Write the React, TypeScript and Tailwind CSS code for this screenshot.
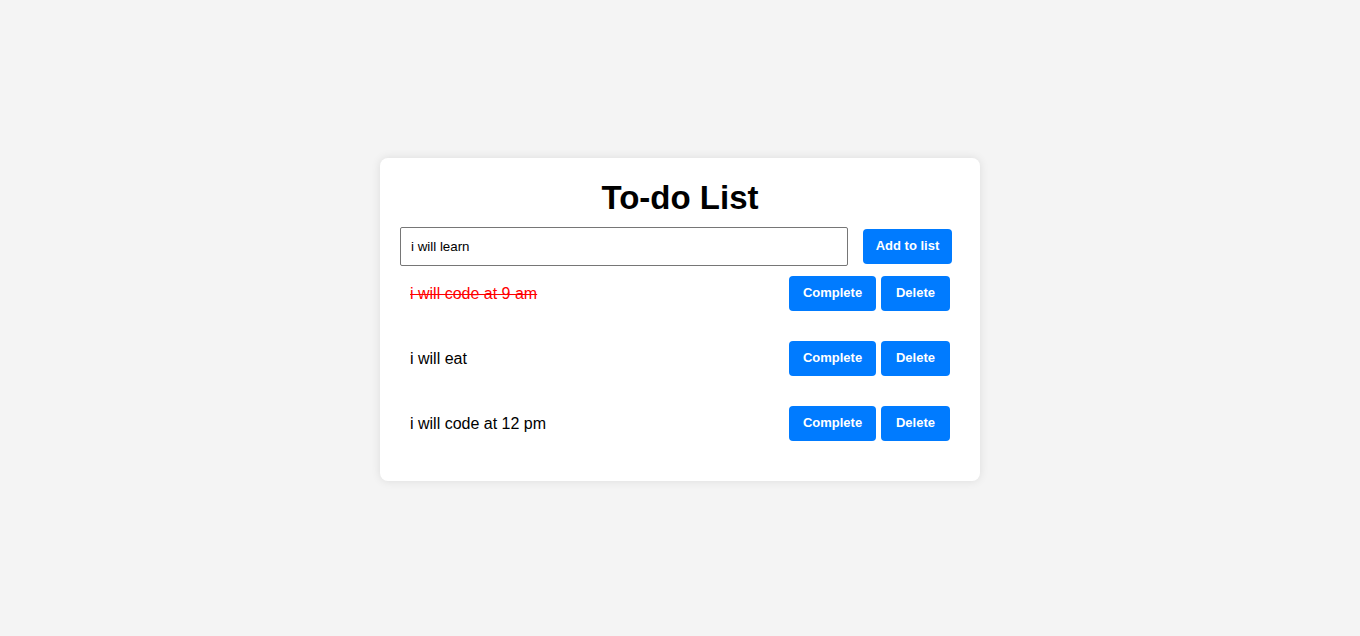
import React, { useState } from 'react';

type Todo = { id: number; text: string; done: boolean };

export default function App() {
    const [input, setInput] = useState('i will learn');
    const [todos, setTodos] = useState<Todo[]>([
        { id: 1, text: 'i will code at 9 am', done: true },
        { id: 2, text: 'i will eat', done: false },
        { id: 3, text: 'i will code at 12 pm', done: false },
    ]);

    const addTodo = () => {
        if (!input.trim()) return;
        setTodos([...todos, { id: Date.now(), text: input, done: false }]);
        setInput('');
    };

    const toggle = (id: number) => setTodos(todos.map((t) => (t.id === id ? { ...t, done: !t.done } : t)));
    const remove = (id: number) => setTodos(todos.filter((t) => t.id !== id));

    const btn = 'h-[35px] rounded-[4px] bg-[#007bff] text-white text-[13px] font-bold flex items-center justify-center';

    return (
        <div className="min-h-screen bg-[#f4f4f4] flex items-center justify-center font-['Liberation_Sans',Arial,sans-serif]">
            <div className="w-[600px] mt-[2px] bg-white rounded-[8px] shadow-[0_0_10px_rgba(0,0,0,0.1)] px-[20px] pt-[21px] pb-[20px]">
                <h1 className="text-center text-[33px] leading-[38px] font-bold text-black mb-[10px]">To-do List</h1>

                {/* Input row */}
                <div className="flex items-center h-[39px]">
                    <input
                        value={input}
                        onChange={(e) => setInput(e.target.value)}
                        className="w-[448px] h-[39px] border border-[#767676] rounded-[2px] px-[10px] text-[13.33px] text-black outline-none"
                    />
                    <button onClick={addTodo} className={`${btn} w-[89px] ml-[15px]`}>
                        Add to list
                    </button>
                </div>

                {/* Todo rows */}
                <ul>
                    {todos.map((todo) => (
                        <li key={todo.id} className="flex items-center justify-between p-[10px] mb-[10px]">
                            <span className={`text-[16px] pt-[2px] ${todo.done ? 'line-through text-[#ff0000]' : 'text-black'}`}>{todo.text}</span>
                            <div className="flex gap-[5px]">
                                <button onClick={() => toggle(todo.id)} className={`${btn} w-[87px]`}>
                                    Complete
                                </button>
                                <button onClick={() => remove(todo.id)} className={`${btn} w-[69px]`}>
                                    Delete
                                </button>
                            </div>
                        </li>
                    ))}
                </ul>
            </div>
        </div>
    );
}
